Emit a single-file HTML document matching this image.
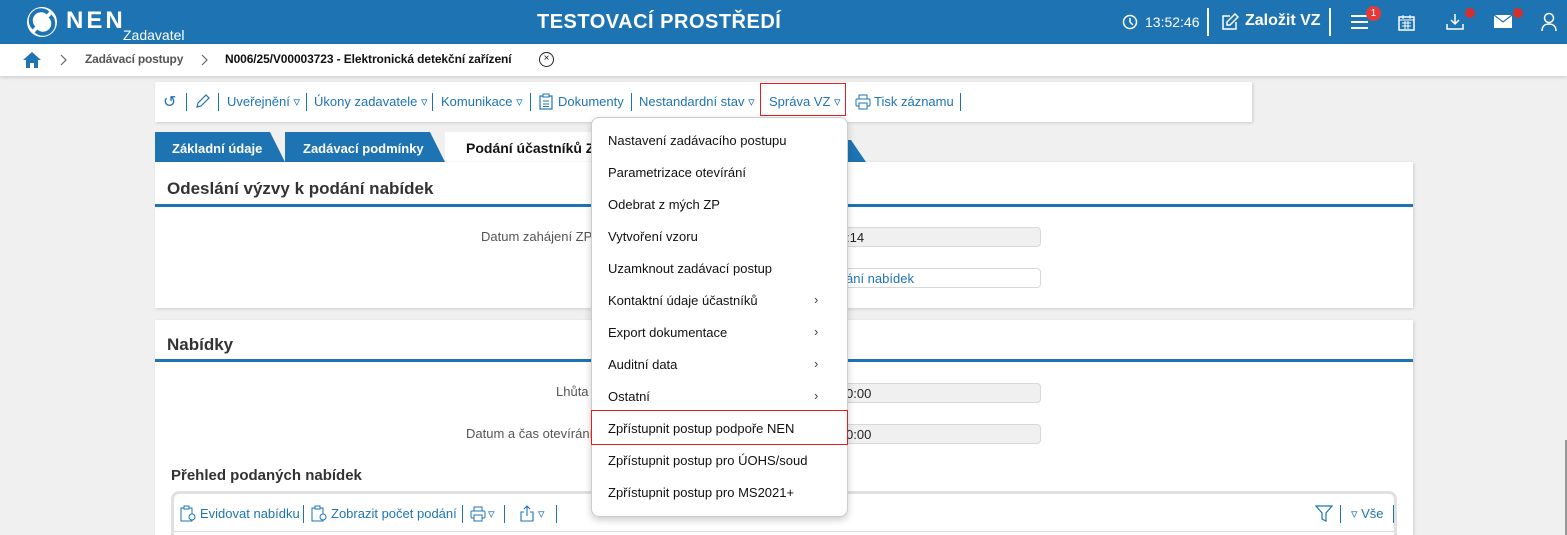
<!DOCTYPE html>
<html style="width:1567px;height:535px;overflow:hidden"><head><meta charset="utf-8"><style>
*{box-sizing:border-box;margin:0;padding:0}
body{width:1567px;height:535px;overflow:hidden;background:#f0f0f0;font-family:"Liberation Sans",sans-serif;font-size:13px;color:#222;position:relative}
.a{position:absolute;white-space:nowrap}
.hdr{position:absolute;left:0;top:0;width:1567px;height:44px;background:#1e74b3;color:#fff}
.bc{position:absolute;left:0;top:44px;width:1567px;height:32px;background:#fff;box-shadow:0 2px 3px rgba(0,0,0,.12)}
.panel{position:absolute;background:#fff;box-shadow:1px 1px 3px rgba(0,0,0,.15);overflow:hidden}
.tb{color:#1e74b3;font-size:13px}
.sep{position:absolute;width:1px;height:18px;background:#1e74b3}
.h2{font-size:17px;font-weight:bold;color:#333}
.line{position:absolute;height:3px;background:#1e74b3}
.lbl{color:#555;font-size:13px;text-align:right}
.inp{position:absolute;height:20px;border:1px solid #d8d8d8;border-radius:4px;background:#f0f0f0;font-size:13px;padding:2px 0 0 0}
.menu{position:absolute;left:591px;top:117px;width:257px;height:400px;background:#fff;border:1px solid #ccc;border-radius:8px;box-shadow:0 3px 8px rgba(0,0,0,.2)}
.mi{position:absolute;left:16px;font-size:13px;color:#111}
.ar{position:absolute;left:222px;font-size:13px;color:#444}
</style></head><body>
<div class="hdr">
 <svg class="a" style="left:26px;top:6px" width="32" height="32" viewBox="0 0 32 32"><circle cx="16" cy="16" r="15" fill="#fff"/><path d="M8 22 A10 10 0 0 1 22 7" stroke="#1e74b3" stroke-width="4" fill="none"/><path d="M24 10 A10 10 0 0 1 10 25" stroke="#1e74b3" stroke-width="4" fill="none"/></svg>
 <div class="a" style="left:66px;top:7px;font-size:24px;font-weight:bold;letter-spacing:3px">NEN</div>
 <div class="a" style="left:123px;top:27px;font-size:14px">Zadavatel</div>
 <div class="a" style="left:537px;top:11px;font-size:20px;font-weight:bold;letter-spacing:.5px">TESTOVACÍ PROSTŘEDÍ</div>
 <svg class="a" style="left:1122px;top:14px" width="16" height="16" viewBox="0 0 16 16"><circle cx="8" cy="8" r="6.5" stroke="#fff" stroke-width="1.5" fill="none"/><path d="M8 4v4l3 3" stroke="#fff" stroke-width="1.5" fill="none"/></svg>
 <div class="a" style="left:1145px;top:14px;font-size:14px">13:52:46</div>
 <div class="a" style="left:1207px;top:8px;width:2px;height:28px;background:#fff"></div>
 <svg class="a" style="left:1221px;top:13px" width="18" height="18" viewBox="0 0 18 18"><path d="M9 3H2v13h13V9" stroke="#fff" stroke-width="1.5" fill="none"/><path d="M14 1l3 3-8 8H6V9z" stroke="#fff" stroke-width="1.5" fill="none"/></svg>
 <div class="a" style="left:1245px;top:12px;font-size:16px;font-weight:bold">Založit VZ</div>
 <div class="a" style="left:1329px;top:8px;width:2px;height:28px;background:#fff"></div>
 <div class="a" style="left:1351px;top:15px;width:17px;height:2px;background:#fff;box-shadow:0 6px 0 #fff,0 12px 0 #fff"></div>
 <div class="a" style="left:1366px;top:6px;width:15px;height:15px;border-radius:50%;background:#e53935;font-size:10px;text-align:center;line-height:15px">1</div>
 <svg class="a" style="left:1398px;top:14px" width="17" height="17" viewBox="0 0 17 17"><rect x="1" y="3" width="15" height="13" stroke="#fff" stroke-width="1.5" fill="none"/><path d="M1 6h15M5 1v4M12 1v4M4 9h9M4 12h9M7 7v8M10 7v8" stroke="#fff" stroke-width="1"/></svg>
 <svg class="a" style="left:1446px;top:13px" width="18" height="18" viewBox="0 0 18 18"><path d="M9 1v9M5 7l4 4 4-4M1 11v5h16v-5" stroke="#fff" stroke-width="1.5" fill="none"/></svg>
 <div class="a" style="left:1465px;top:8px;width:10px;height:10px;border-radius:50%;background:#d32f2f"></div>
 <svg class="a" style="left:1494px;top:15px" width="18" height="13" viewBox="0 0 18 13"><rect x="0" y="0" width="18" height="13" fill="#fff"/><path d="M0 0l9 7 9-7" stroke="#1e74b3" stroke-width="1.2" fill="none"/></svg>
 <div class="a" style="left:1513px;top:8px;width:10px;height:10px;border-radius:50%;background:#d32f2f"></div>
 <svg class="a" style="left:1541px;top:12px" width="16" height="19" viewBox="0 0 16 19"><circle cx="8" cy="6" r="4.5" stroke="#fff" stroke-width="1.5" fill="none"/><path d="M1 19c0-5 3-7 7-7s7 2 7 7" stroke="#fff" stroke-width="1.5" fill="none"/></svg>
</div>
<div class="bc">
 <svg class="a" style="left:23px;top:8px" width="18" height="16" viewBox="0 0 18 16"><path d="M9 0L0 8h3v8h4v-5h4v5h4V8h3z" fill="#1e74b3"/></svg>
 <svg class="a" style="left:60px;top:10px" width="8" height="12" viewBox="0 0 8 12"><path d="M1 1l5 5-5 5" stroke="#666" stroke-width="1.2" fill="none"/></svg>
 <div class="a" style="left:85px;top:8px;color:#555;font-size:12px;font-weight:bold;letter-spacing:-.2px">Zadávací postupy</div>
 <svg class="a" style="left:201px;top:10px" width="8" height="12" viewBox="0 0 8 12"><path d="M1 1l5 5-5 5" stroke="#666" stroke-width="1.2" fill="none"/></svg>
 <div class="a" style="left:225px;top:8px;color:#111;font-size:12px;font-weight:bold;letter-spacing:-.1px">N006/25/V00003723 - Elektronická detekční zařízení</div>
 <div class="a" style="left:539px;top:8px;width:15px;height:15px;border:1.5px solid #222;border-radius:50%;font-size:10px;text-align:center;line-height:12px">×</div>
</div>
<div class="panel" style="left:155px;top:82px;width:1097px;height:40px">
 <div class="a" style="left:8px;top:10px;font-size:16px;color:#1e74b3">↺</div>
 <div class="sep" style="left:31px;top:11px"></div>
 <svg class="a" style="left:40px;top:11px" width="16" height="16" viewBox="0 0 16 16"><path d="M2 14l1-4 8-8 3 3-8 8z" stroke="#1e74b3" stroke-width="1.2" fill="none"/></svg>
 <div class="sep" style="left:63px;top:11px"></div>
 <div class="a tb" style="left:72px;top:12px">Uveřejnění ▿</div>
 <div class="sep" style="left:151px;top:11px"></div>
 <div class="a tb" style="left:159px;top:12px">Úkony zadavatele ▿</div>
 <div class="sep" style="left:277px;top:11px"></div>
 <div class="a tb" style="left:286px;top:12px">Komunikace ▿</div>
 <div class="sep" style="left:375px;top:11px"></div>
 <svg class="a" style="left:384px;top:11px" width="14" height="17" viewBox="0 0 14 17"><rect x="1" y="3" width="12" height="13" stroke="#1e74b3" stroke-width="1.2" fill="none"/><rect x="4" y="1" width="6" height="3" fill="#fff" stroke="#1e74b3"/><path d="M4 8h6M4 11h6M4 13.5h6" stroke="#1e74b3"/></svg>
 <div class="a tb" style="left:403px;top:12px">Dokumenty</div>
 <div class="sep" style="left:476px;top:11px"></div>
 <div class="a tb" style="left:484px;top:12px">Nestandardní stav ▿</div>
 <div class="a" style="left:605px;top:1px;width:86px;height:33px;border:1px solid #e02020"></div>
 <div class="a tb" style="left:614px;top:12px">Správa VZ ▿</div>
 <svg class="a" style="left:700px;top:12px" width="16" height="16" viewBox="0 0 16 16"><rect x="4" y="1" width="8" height="4" stroke="#1e74b3" fill="none"/><rect x="1" y="5" width="14" height="7" rx="1" stroke="#1e74b3" fill="none"/><rect x="4" y="9" width="8" height="6" fill="#fff" stroke="#1e74b3"/></svg>
 <div class="a tb" style="left:719px;top:12px">Tisk záznamu</div>
 <div class="sep" style="left:805px;top:11px"></div>
</div>
<div class="a" style="left:155px;top:132px;width:130px;height:30px;background:#1e74b3;clip-path:polygon(0 0,115px 0,130px 30px,0 30px)"></div>
<div class="a" style="left:172px;top:141px;color:#fff;font-weight:bold;font-size:13px">Základní údaje</div>
<div class="a" style="left:285px;top:132px;width:160px;height:30px;background:#1e74b3;clip-path:polygon(0 0,145px 0,160px 30px,0 30px)"></div>
<div class="a" style="left:303px;top:141px;color:#fff;font-weight:bold;font-size:13px">Zadávací podmínky</div>
<div class="a" style="left:445px;top:132px;width:150px;height:30px;background:#fff"></div>
<div class="a" style="left:466px;top:140px;color:#111;font-weight:bold;font-size:14px">Podání účastníků Z</div>
<div class="a" style="left:846px;top:140px;width:20px;height:22px;background:#1e74b3;clip-path:polygon(0 0,5px 0,20px 22px,0 22px)"></div>
<div class="panel" style="left:155px;top:162px;width:1258px;height:146px">
 <div class="a h2" style="left:12px;top:17px">Odeslání výzvy k podání nabídek</div>
 <div class="line" style="left:0;top:42px;width:1258px"></div>
 <div class="a lbl" style="left:326px;top:67px">Datum zahájení ZP</div>
 <div class="inp" style="left:440px;top:65px;width:446px"><span style="margin-left:250px">:14</span></div>
 <div class="inp" style="left:440px;top:106px;width:446px;background:#fff;color:#1e74b3"><span style="margin-left:250px">ání nabídek</span></div>
</div>
<div class="panel" style="left:155px;top:320px;width:1258px;height:215px">
 <div class="a h2" style="left:12px;top:15px">Nabídky</div>
 <div class="line" style="left:0;top:39px;width:1258px"></div>
 <div class="a lbl" style="left:401px;top:64px">Lhůta</div>
 <div class="inp" style="left:440px;top:63px;width:446px"><span style="margin-left:250px">0:00</span></div>
 <div class="a lbl" style="left:311px;top:106px">Datum a čas otevírání</div>
 <div class="inp" style="left:440px;top:104px;width:446px"><span style="margin-left:250px">0:00</span></div>
 <div class="a" style="left:16px;top:147px;font-size:15px;font-weight:bold;color:#333">Přehled podaných nabídek</div>
 <div class="a" style="left:16px;top:171px;width:1226px;height:60px;border:3px solid #e0e0e0;border-radius:8px;background:#fff">
  <svg class="a" style="left:6px;top:11px" width="16" height="17" viewBox="0 0 16 17"><rect x="1" y="3" width="11" height="13" stroke="#1e74b3" fill="none"/><rect x="4" y="1" width="5" height="3" fill="#fff" stroke="#1e74b3"/><circle cx="12" cy="12" r="3" fill="#fff" stroke="#1e74b3"/></svg>
  <div class="a tb" style="left:26px;top:12px">Evidovat nabídku</div>
  <div class="sep" style="left:129px;top:11px"></div>
  <svg class="a" style="left:137px;top:11px" width="16" height="17" viewBox="0 0 16 17"><rect x="1" y="3" width="11" height="13" stroke="#1e74b3" fill="none"/><rect x="4" y="1" width="5" height="3" fill="#fff" stroke="#1e74b3"/><circle cx="12" cy="12" r="3" fill="#fff" stroke="#1e74b3"/></svg>
  <div class="a tb" style="left:157px;top:12px">Zobrazit počet podání</div>
  <div class="sep" style="left:288px;top:11px"></div>
  <svg class="a" style="left:296px;top:12px" width="16" height="16" viewBox="0 0 16 16"><rect x="4" y="1" width="8" height="4" stroke="#1e74b3" fill="none"/><rect x="1" y="5" width="14" height="7" rx="1" stroke="#1e74b3" fill="none"/><rect x="4" y="9" width="8" height="6" fill="#fff" stroke="#1e74b3"/></svg>
  <div class="a tb" style="left:314px;top:12px">▿</div>
  <div class="sep" style="left:330px;top:11px"></div>
  <svg class="a" style="left:345px;top:10px" width="16" height="18" viewBox="0 0 16 18"><path d="M8 12V2M5 5l3-3 3 3M5 8H2v9h12V8h-3" stroke="#1e74b3" stroke-width="1.1" fill="none"/></svg>
  <div class="a tb" style="left:364px;top:12px">▿</div>
  <div class="sep" style="left:382px;top:11px"></div>
  <svg class="a" style="left:1141px;top:11px" width="18" height="17" viewBox="0 0 18 17"><path d="M1 1h16l-6 7v8l-4-2V8z" stroke="#1e74b3" stroke-width="1.2" fill="none"/></svg>
  <div class="sep" style="left:1166px;top:11px"></div>
  <div class="a tb" style="left:1177px;top:12px">▿ Vše</div>
  <div class="sep" style="left:1219px;top:11px"></div>
  <div class="a" style="left:0;top:37px;width:1220px;height:1px;background:#ddd"></div>
 </div>
</div>
<div class="a" style="left:1565px;top:440px;width:2px;height:95px;background:#999"></div>
<div class="menu">
 <div class="mi" style="top:15px">Nastavení zadávacího postupu</div>
 <div class="mi" style="top:47px">Parametrizace otevírání</div>
 <div class="mi" style="top:79px">Odebrat z mých ZP</div>
 <div class="mi" style="top:111px">Vytvoření vzoru</div>
 <div class="mi" style="top:143px">Uzamknout zadávací postup</div>
 <div class="mi" style="top:175px">Kontaktní údaje účastníků</div><div class="ar" style="top:174px">›</div>
 <div class="mi" style="top:207px">Export dokumentace</div><div class="ar" style="top:206px">›</div>
 <div class="mi" style="top:239px">Auditní data</div><div class="ar" style="top:238px">›</div>
 <div class="mi" style="top:271px">Ostatní</div><div class="ar" style="top:270px">›</div>
 <div class="a" style="left:-1px;top:292px;width:257px;height:35px;border:1px solid #e02020"></div>
 <div class="mi" style="top:303px">Zpřístupnit postup podpoře NEN</div>
 <div class="mi" style="top:335px">Zpřístupnit postup pro ÚOHS/soud</div>
 <div class="mi" style="top:367px">Zpřístupnit postup pro MS2021+</div>
</div>
</body></html>
